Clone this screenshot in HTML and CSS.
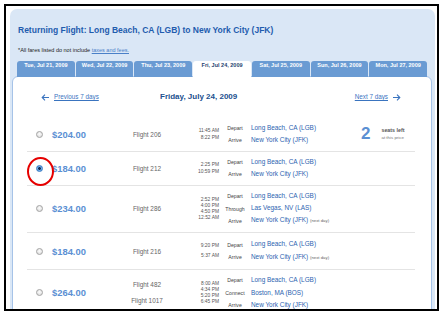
FILE: index.html
```html
<!DOCTYPE html>
<html lang="en">
<head>
  <meta charset="UTF-8" />
  <meta name="viewport" content="width=device-width, initial-scale=1.0"/>
  <title>Returning Flight</title>
  <link rel="stylesheet" href="styles.css">
</head>
<body>
  <div class="frame">
    <div class="panel">
      <h2 class="title">Returning Flight: Long Beach, CA (LGB) to New York City (JFK)</h2>
      <p class="note">*All fares listed do not include <a href="#">taxes and fees.</a></p>

      <ul class="tabs">
        <li>Tue, Jul 21, 2009</li>
        <li>Wed, Jul 22, 2009</li>
        <li>Thu, Jul 23, 2009</li>
        <li class="active">Fri, Jul 24, 2009</li>
        <li>Sat, Jul 25, 2009</li>
        <li>Sun, Jul 26, 2009</li>
        <li>Mon, Jul 27, 2009</li>
      </ul>

      <div class="card">
        <div class="day-nav">
          <a class="prev" href="#">
            <svg width="8" height="7" viewBox="0 0 8 7"><path d="M8 3.5H1.3M4 0.7L1.2 3.5L4 6.3" fill="none" stroke="currentColor" stroke-width="1.1"/></svg>
            <span>Previous 7 days</span>
          </a>
          <div class="day">Friday, July 24, 2009</div>
          <a class="next" href="#">
            <span>Next 7 days</span>
            <svg width="8" height="7" viewBox="0 0 8 7"><path d="M0 3.5H6.7M4 0.7L6.8 3.5L4 6.3" fill="none" stroke="currentColor" stroke-width="1.1"/></svg>
          </a>
        </div>

        <div class="row">
          <span class="radio"></span>
          <div class="price">$204.00</div>
          <div class="flight">Flight 206</div>
          <div class="times"><div>11:45 AM</div><div>8:22 PM</div></div>
          <div class="labels"><div>Depart</div><div>Arrive</div></div>
          <div class="places"><div>Long Beach, CA (LGB)</div><div>New York City (JFK)</div></div>
          <div class="seats"><b>2</b><span>seats left<small>at this price</small></span></div>
        </div>

        <div class="row selected">
          <span class="radio on"></span>
          <div class="price">$184.00</div>
          <div class="flight">Flight 212</div>
          <div class="times"><div>2:25 PM</div><div>10:59 PM</div></div>
          <div class="labels"><div>Depart</div><div>Arrive</div></div>
          <div class="places"><div>Long Beach, CA (LGB)</div><div>New York City (JFK)</div></div>
          <span class="mark"></span>
        </div>

        <div class="row">
          <span class="radio"></span>
          <div class="price">$234.00</div>
          <div class="flight">Flight 286</div>
          <div class="times four"><div>2:52 PM</div><div>4:00 PM</div><div>4:50 PM</div><div>12:52 AM</div></div>
          <div class="labels"><div>Depart</div><div>Through</div><div>Arrive</div></div>
          <div class="places"><div>Long Beach, CA (LGB)</div><div>Las Vegas, NV (LAS)</div><div>New York City (JFK) <small>(next day)</small></div></div>
        </div>

        <div class="row tall">
          <span class="radio"></span>
          <div class="price">$184.00</div>
          <div class="flight">Flight 216</div>
          <div class="times"><div>9:20 PM</div><div>5:37 AM</div></div>
          <div class="labels"><div>Depart</div><div>Arrive</div></div>
          <div class="places"><div>Long Beach, CA (LGB)</div><div>New York City (JFK) <small>(next day)</small></div></div>
        </div>

        <div class="row">
          <span class="radio"></span>
          <div class="price">$264.00</div>
          <div class="flight two"><div>Flight 482</div><div>Flight 1017</div></div>
          <div class="times four"><div>8:00 AM</div><div>4:34 PM</div><div>5:20 PM</div><div>6:45 PM</div></div>
          <div class="labels"><div>Depart</div><div>Connect</div><div>Arrive</div></div>
          <div class="places"><div>Long Beach, CA (LGB)</div><div>Boston, MA (BOS)</div><div>New York City (JFK)</div></div>
        </div>
      </div>
    </div>
  </div>
</body>
</html>
```

FILE: styles.css
```css
body {
  margin: 0;
  background: #fff;
  font-family: "Liberation Sans", Arial, sans-serif;
}
.frame {
  margin: 4px 0 0 4px;
  width: 435px;
  height: 307px;
  box-sizing: border-box;
  border: 2px solid #000;
  overflow: hidden;
}
.panel {
  margin: 3px 2px 0 4px;
  padding: 16px 3px 0 2px;
  background: #dae7f6;
  border-radius: 7px 7px 0 0;
}
.title {
  margin: 0 0 0 6px;
  font-size: 8.5px;
  line-height: 11px;
  color: #1f5cae;
}
.note {
  margin: 10.5px 0 0 6px;
  font-size: 5.5px;
  line-height: 7px;
  color: #222;
}
.note a {
  color: #4a80c8;
}

.tabs {
  display: flex;
  gap: 1px;
  list-style: none;
  margin: 7.5px 5px -1px 5px;
  padding: 0;
  position: relative;
}
.tabs li {
  flex: 1;
  height: 16px;
  padding-top: 1px;
  box-sizing: border-box;
  background: #6a9bd3;
  color: #fff;
  font-size: 5.5px;
  font-weight: bold;
  line-height: 6px;
  text-align: center;
  border-radius: 3px 3px 0 0;
}
.tabs li.active {
  background: #fff;
  color: #1d3f70;
}

.card {
  background: #fff;
  border: 1px solid #a6c3e8;
  border-radius: 6px 6px 0 0;
  min-height: 260px;
}
.day-nav {
  display: flex;
  align-items: center;
  padding: 15px 30px 16px 28px;
  line-height: 10px;
}
.day-nav a {
  display: flex;
  align-items: center;
  gap: 5px;
  color: #3a74bf;
  font-size: 6.3px;
}
.day-nav .prev {
  width: 119px;
}
.day-nav .next {
  margin-left: auto;
}
.day {
  font-size: 8px;
  font-weight: bold;
  color: #214f8e;
}

.row {
  display: grid;
  grid-template-columns: 16px 68px 54px 45px 32px 110px auto;
  align-items: center;
  margin: 0 16px 0 14px;
  padding: 4px 0 4px 9px;
  border-bottom: 1px solid #e4e4e4;
  position: relative;
}
.row.tall {
  padding: 5.3px 0 5.3px 9px;
}
.radio {
  width: 7px;
  height: 7px;
  box-sizing: border-box;
  border: 1px solid #a3a3a3;
  border-radius: 50%;
  background: radial-gradient(circle at 50% 40%, #fdfdfd, #d6d6d6);
}
.radio.on {
  border-color: #3b7cc4;
  background: radial-gradient(circle, #0d2b55 0 1.1px, #7db8f0 1.7px, #4387d0);
}
.price {
  font-size: 9.4px;
  font-weight: bold;
  color: #5b8fd3;
}
.flight {
  font-size: 6.4px;
  color: #666;
  text-align: center;
}
.flight.two {
  line-height: 16px;
}
.times {
  font-size: 4.9px;
  line-height: 7.5px;
  color: #555;
  text-align: right;
}
.times.four {
  line-height: 5.8px;
}
.row.tall .times {
  line-height: 10px;
}
.labels {
  font-size: 5.2px;
  line-height: 12.4px;
  color: #444;
  text-align: center;
}
.places {
  font-size: 6.4px;
  line-height: 12.4px;
  color: #2b63b0;
  white-space: nowrap;
}
.places small {
  font-size: 4.3px;
  color: #666;
}
.seats {
  display: flex;
  align-items: center;
  gap: 11px;
  color: #555;
}
.seats b {
  font-size: 17px;
  line-height: 14px;
  color: #5b8fd3;
}
.seats span {
  font-size: 5.3px;
  font-weight: bold;
  line-height: 7px;
}
.seats small {
  display: block;
  font-size: 4.4px;
  font-weight: normal;
  color: #777;
}
.mark {
  position: absolute;
  left: 0;
  top: 5px;
  width: 27px;
  height: 29px;
  box-sizing: border-box;
  border: 2.6px solid #e60000;
  border-radius: 50%;
}
```
